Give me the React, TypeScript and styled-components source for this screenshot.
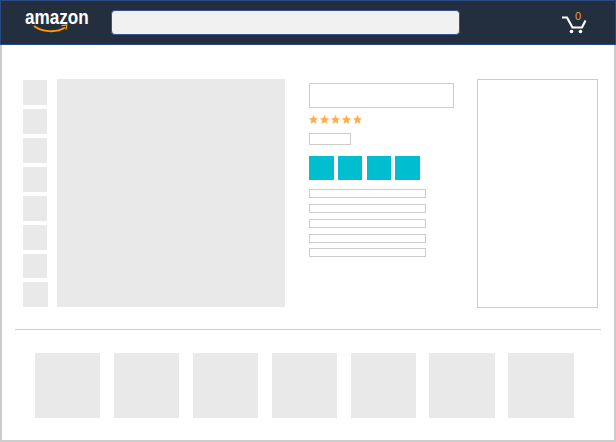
import React from 'react'
import styled, { createGlobalStyle } from 'styled-components'

const GlobalStyle = createGlobalStyle`
  html, body {
    margin: 0;
    padding: 0;
    background: #fff;
    font-family: "Liberation Sans", Arial, sans-serif;
  }
  * { box-sizing: border-box; }
`
const Page = styled.div`
  width: 616px;
  height: 442px;
  display: flex;
  flex-direction: column;
  overflow: hidden;
`
const NavBar = styled.header`
  height: 45px;
  flex: none;
  display: flex;
  align-items: center;
  background: #232f3e;
  border: 1px solid #2a4a85;
  padding-left: 24px;
`
const LogoWrap = styled.div`
  width: 62px;
  height: 32px;
  position: relative;
  margin-top: -1px;
`
const LogoText = styled.span`
  display: block;
  color: #fff;
  font-size: 20px;
  font-weight: bold;
  line-height: 22px;
  white-space: nowrap;
  transform: scaleX(0.855);
  transform-origin: left;
`
const Smile = styled.svg`
  position: absolute;
  left: 8px;
  top: 18px;
`
const SearchBox = styled.div`
  width: 349px;
  height: 25px;
  margin-left: 24px;
  background: #f1f1f1;
  border: 1px solid #2f5597;
  border-radius: 4px;
`
const CartWrap = styled.div`
  width: 26px;
  height: 24px;
  margin-left: 101px;
  position: relative;
`
const CartCount = styled.span`
  position: absolute;
  left: 14px;
  top: -1px;
  color: #e8a33d;
  font-size: 11px;
  line-height: 12px;
`
const CartIcon = styled.svg`
  position: absolute;
  left: 0;
  top: 0;
`
const Content = styled.main`
  flex: 1;
  display: flex;
  flex-direction: column;
  border: 2px solid #ccc;
  border-top: none;
`
const ProductRow = styled.section`
  display: flex;
  align-items: flex-start;
  padding: 34px 0 0 21px;
`
const ThumbColumn = styled.div`
  width: 25px;
  margin-top: 1px;
  display: flex;
  flex-direction: column;
  gap: 4px;
`
const Thumb = styled.div<{ $last?: boolean; $short?: boolean }>`
  width: ${p => (p.$last ? 25 : 24)}px;
  height: ${p => (p.$short ? 24 : 25)}px;
  background: #e9e9e9;
`
const MainImage = styled.div`
  width: 228px;
  height: 228px;
  margin-left: 9px;
  background: #e9e9e9;
`
const InfoColumn = styled.div`
  width: 145px;
  margin-left: 24px;
  padding-top: 4px;
  display: flex;
  flex-direction: column;
`
const TitleBox = styled.div`
  width: 145px;
  height: 25px;
  border: 1px solid #ccc;
`
const Stars = styled.div`
  display: flex;
  gap: 2px;
  margin-top: 7px;
  height: 9px;
`
const PriceBox = styled.div`
  width: 42px;
  height: 12px;
  margin-top: 9px;
  border: 1px solid #ccc;
`
const Swatches = styled.div`
  display: flex;
  margin-top: 11px;
`
const Swatch = styled.div<{ $w: number; $gap: number }>`
  width: ${p => p.$w}px;
  height: 24px;
  margin-right: ${p => p.$gap}px;
  background: #00bdd0;
`
const Lines = styled.div`
  margin-top: 9px;
  display: flex;
  flex-direction: column;
`
const Line = styled.div<{ $gap: number }>`
  width: 117px;
  height: 9px;
  margin-bottom: ${p => p.$gap}px;
  border: 1px solid #ccc;
`
const SideBox = styled.aside`
  width: 121px;
  height: 229px;
  margin-left: 23px;
  border: 1px solid #ccc;
`
const Divider = styled.hr`
  width: 586px;
  height: 1px;
  margin: 21px 0 0 13px;
  border: none;
  background: #ccc;
`
const Related = styled.section`
  display: flex;
  padding: 23px 0 0 33px;
`
const RelatedItem = styled.div<{ $w: number; $gap: number }>`
  width: ${p => p.$w}px;
  height: 65px;
  margin-right: ${p => p.$gap}px;
  background: #e9e9e9;
`

const Star = () => (
  <svg width="9" height="9" viewBox="0 0 24 24">
    <polygon
      fill="#ffae47"
      stroke="#ffae47"
      strokeOpacity="0.45"
      strokeWidth="2"
      points="12,1 15.4,8.4 23.4,9.3 17.5,14.8 19.1,22.8 12,18.8 4.9,22.8 6.5,14.8 .6,9.3 8.6,8.4"
    />
  </svg>
)

const thumbs = [0, 1, 2, 3, 4, 5, 6, 7]
const swatches = [
  { w: 25, gap: 4 },
  { w: 24, gap: 5 },
  { w: 24, gap: 4 },
  { w: 25, gap: 0 },
]
const lineGaps = [6, 6, 6, 5, 0]
const related = [
  { w: 65, gap: 14 },
  { w: 65, gap: 14 },
  { w: 65, gap: 14 },
  { w: 65, gap: 14 },
  { w: 65, gap: 13 },
  { w: 66, gap: 13 },
  { w: 66, gap: 0 },
]

const App = () => {
  return (
    <Page>
      <GlobalStyle />
      <NavBar>
        <LogoWrap>
          <LogoText>amazon</LogoText>
          <Smile width="36" height="10" viewBox="0 0 36 10">
            <path d="M1 2C9 8 23 9.2 32 3.5" fill="none" stroke="#f90" strokeWidth="1.9" />
            <path d="M28.5 1.6L33.8 1L33 5.6" fill="none" stroke="#f90" strokeWidth="1.2" />
          </Smile>
        </LogoWrap>
        <SearchBox />
        <CartWrap>
          <CartCount>0</CartCount>
          <CartIcon width="26" height="24" viewBox="0 0 26 24">
            <path d="M1 6.5H6L11.5 16.5H21L24.5 9.5" fill="none" stroke="#fff" strokeWidth="2.2" />
            <circle cx="10.5" cy="20.5" r="1.8" fill="#fff" />
            <circle cx="19.5" cy="20.5" r="1.8" fill="#fff" />
          </CartIcon>
        </CartWrap>
      </NavBar>
      <Content>
        <ProductRow>
          <ThumbColumn>
            {thumbs.map(t => (
              <Thumb key={t} $short={t === 6} $last={t === 7} />
            ))}
          </ThumbColumn>
          <MainImage />
          <InfoColumn>
            <TitleBox />
            <Stars>
              {[0, 1, 2, 3, 4].map(s => <Star key={s} />)}
            </Stars>
            <PriceBox />
            <Swatches>
              {swatches.map((s, i) => <Swatch key={i} $w={s.w} $gap={s.gap} />)}
            </Swatches>
            <Lines>
              {lineGaps.map((g, i) => <Line key={i} $gap={g} />)}
            </Lines>
          </InfoColumn>
          <SideBox />
        </ProductRow>
        <Divider />
        <Related>
          {related.map((r, i) => <RelatedItem key={i} $w={r.w} $gap={r.gap} />)}
        </Related>
      </Content>
    </Page>
  )
}

export default App
